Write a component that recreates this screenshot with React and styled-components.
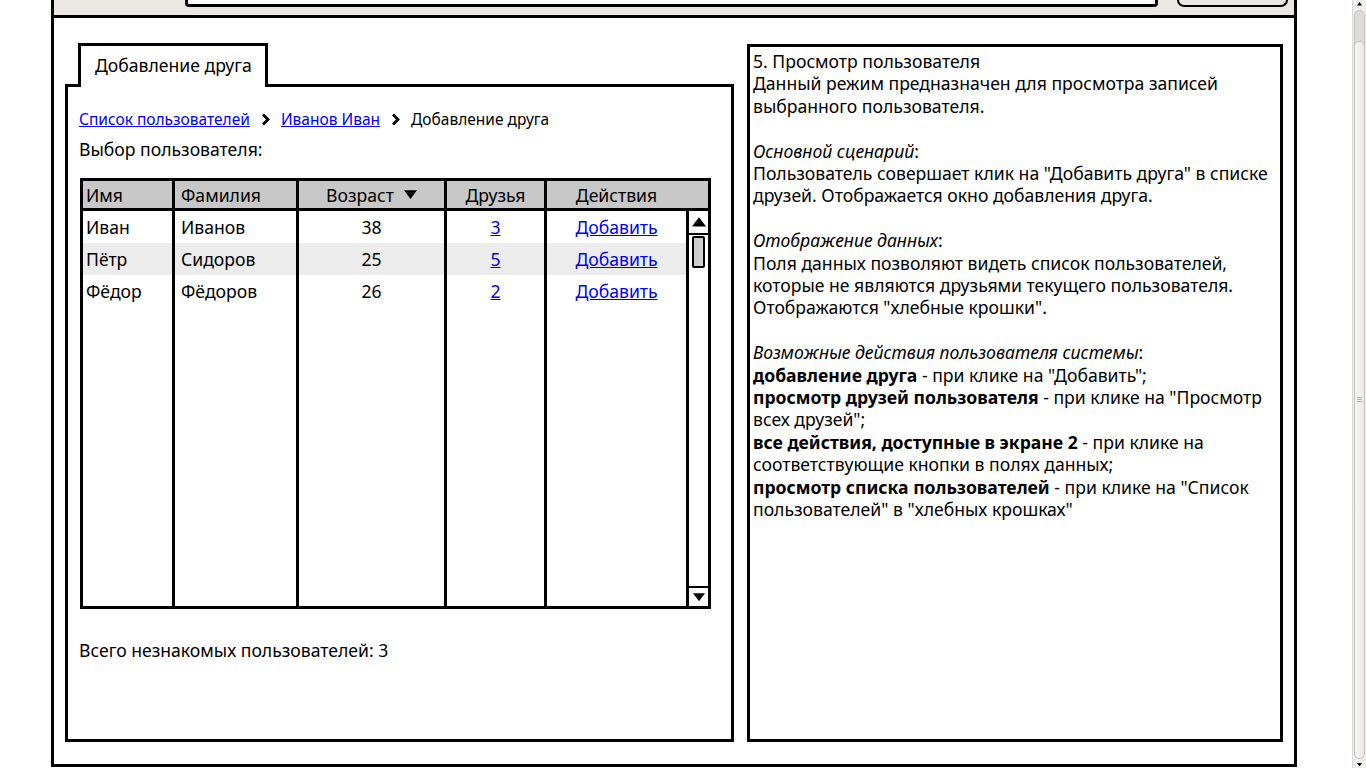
import styled, { createGlobalStyle } from "styled-components";

const GlobalStyle = createGlobalStyle`
  body {
    margin: 0;
    font-family: "Noto Sans", "Open Sans", sans-serif;
    color: #000;
  }
`;

const Page = styled.div`
  display: flex;
  width: 1366px;
  height: 768px;
  overflow: hidden;
  background: #fff;
`;

const Stage = styled.div`
  flex: 1;
  padding-left: 51px;
`;

const Window = styled.div`
  width: 1246px;
  height: 767px;
  box-sizing: border-box;
  border: 3px solid #000;
  border-top: none;
  display: flex;
  flex-direction: column;
`;

const TopStrip = styled.div`
  height: 18px;
  flex-shrink: 0;
  box-sizing: border-box;
  background: #ebe8e4;
  border-bottom: 3px solid #000;
  display: flex;
  align-items: flex-start;
`;

const UrlBox = styled.div`
  margin-left: 131px;
  width: 973px;
  height: 7px;
  box-sizing: border-box;
  background: #fff;
  border: 3px solid #000;
  border-top: none;
  border-radius: 0 0 4px 4px;
`;

const GoButton = styled.div`
  margin-left: 19px;
  width: 111px;
  height: 7px;
  box-sizing: border-box;
  border: 2px solid #000;
  border-top: none;
  border-radius: 0 0 9px 9px;
`;

const Content = styled.div`
  flex: 1;
  min-height: 0;
  display: flex;
  gap: 13px;
  padding: 25px 11px 22px 11px;
`;

const LeftPane = styled.div`
  width: 669px;
  display: flex;
  flex-direction: column;
`;

const TabRow = styled.div`
  display: flex;
  padding-left: 13px;
`;

const Tab = styled.div`
  position: relative;
  z-index: 1;
  width: 190px;
  height: 44px;
  box-sizing: border-box;
  padding: 0 0 3px 14px;
  margin-bottom: -3px;
  border: 3px solid #000;
  border-bottom: none;
  background: #fff;
  display: flex;
  align-items: center;
  font-size: 17.6px;
`;

const TabBody = styled.div`
  flex: 1;
  border: 3px solid #000;
  padding: 22px 12px 0 11px;
  display: flex;
  flex-direction: column;
`;

const Crumbs = styled.div`
  display: flex;
  align-items: center;
  gap: 11px;
  height: 20px;
  font-size: 15.5px;
`;

const Link = styled.a`
  color: #0000ff;
  text-decoration: underline;
  cursor: pointer;
`;

const Text = styled.div`
  font-size: 17.6px;
  line-height: 22px;
  margin-top: ${(p) => p.top || 0}px;
`;

const Table = styled.div`
  flex-shrink: 0;
  margin: ${(p) => p.top}px 0 0 1px;
  width: 631px;
  height: 431px;
  box-sizing: border-box;
  border: 3px solid #000;
  display: flex;
  flex-direction: column;
`;

const HeadRow = styled.div`
  display: flex;
  height: 27px;
  background: #c8c8c8;
  border-bottom: 3px solid #000;
  font-size: 17.6px;
`;

const Col = styled.div`
  width: ${(p) => (p.w ? `${p.w}px` : "auto")};
  flex: ${(p) => (p.w ? "none" : 1)};
  box-sizing: border-box;
  border-right: ${(p) => (p.last ? "none" : "3px solid #000")};
  display: flex;
  flex-direction: column;
`;

const HeadCell = styled(Col)`
  flex-direction: row;
  align-items: center;
  justify-content: ${(p) => (p.center ? "center" : "flex-start")};
  padding-left: ${(p) => p.pl || 0}px;
  padding-right: ${(p) => p.pr || 0}px;
  gap: 10px;
`;

const Body = styled.div`
  flex: 1;
  display: flex;
  min-height: 0;
`;

const Cell = styled.div`
  height: 32px;
  display: flex;
  align-items: center;
  justify-content: ${(p) => (p.center ? "center" : "flex-start")};
  padding-left: ${(p) => p.pl || 0}px;
  background: ${(p) => (p.striped ? "#ececec" : "transparent")};
  font-size: 17.6px;
`;

const TableScroll = styled.div`
  width: 22px;
  box-sizing: border-box;
  border-left: 3px solid #000;
  display: flex;
  flex-direction: column;
  align-items: center;
`;

const ArrowBox = styled.div`
  width: 100%;
  height: ${(p) => p.h}px;
  box-sizing: border-box;
  border-top: ${(p) => (p.down ? "2px solid #000" : "none")};
  border-bottom: ${(p) => (p.down ? "none" : "2px solid #000")};
  display: flex;
  align-items: center;
  justify-content: center;
`;

const Thumb = styled.div`
  width: 13px;
  height: 32px;
  margin-top: 1px;
  box-sizing: border-box;
  border: 2px solid #000;
  border-radius: 2px;
  background: #cfcfcf;
`;

const Spacer = styled.div`
  flex: 1;
`;

const InfoPanel = styled.div`
  width: 536px;
  margin-top: 1px;
  box-sizing: border-box;
  border: 3px solid #000;
  padding: 3px 3px;
  font-size: 17.6px;
  line-height: 22.4px;
`;

const Para = styled.p`
  margin: 0 0 ${(p) => (p.gap ? "22.4px" : "0")};
`;

const PageScroll = styled.div`
  width: 14px;
  background: #efeeec;
  border-left: 1px solid #dcdad7;
  box-sizing: border-box;
  display: flex;
  flex-direction: column;
  align-items: center;
  padding: 2px 1px 2px;
`;

const PageTrack = styled.div`
  width: 11px;
  flex: 1;
  border: 1px solid #c4c2be;
  border-radius: 6px;
  background: #dddbd7;
  display: flex;
  flex-direction: column;
  box-sizing: border-box;
  margin: 4px 0;
`;

const PageThumb = styled.div`
  margin-top: 30px;
  flex: 1;
  border-top: 1px solid #c4c2be;
  border-radius: 6px;
  background: linear-gradient(to right, #f7f6f5, #ebe9e6);
  display: flex;
  align-items: center;
  justify-content: center;
`;

const Grip = styled.div`
  width: 5px;
  height: 5px;
  border-top: 1px solid #b0aeaa;
  border-bottom: 1px solid #b0aeaa;
  box-sizing: border-box;
  position: relative;
  &::after {
    content: "";
    position: absolute;
    left: 0;
    right: 0;
    top: 1px;
    border-top: 1px solid #b0aeaa;
  }
`;

const Chevron = () => (
  <svg width="9" height="13" viewBox="0 0 9 13">
    <path d="M2 1.5 L7 6.5 L2 11.5" fill="none" stroke="#000" strokeWidth="2.8" />
  </svg>
);

const Triangle = ({ up, size = 12 }) => (
  <svg width={size} height={size * 0.7} viewBox="0 0 12 8">
    <path d={up ? "M0 8 L6 0 L12 8 Z" : "M0 0 L12 0 L6 8 Z"} fill="#000" />
  </svg>
);

const users = [
  { first: "Иван", last: "Иванов", age: 38, friends: 3 },
  { first: "Пётр", last: "Сидоров", age: 25, friends: 5 },
  { first: "Фёдор", last: "Фёдоров", age: 26, friends: 2 },
];

const App = () => {
  return (
    <Page>
      <GlobalStyle />
      <Stage>
        <Window>
          <TopStrip>
            <UrlBox />
            <GoButton />
          </TopStrip>

          <Content>
            <LeftPane>
              <TabRow>
                <Tab>Добавление друга</Tab>
              </TabRow>
              <TabBody>
                <Crumbs>
                  <Link>Список пользователей</Link>
                  <Chevron />
                  <Link>Иванов Иван</Link>
                  <Chevron />
                  <span>Добавление друга</span>
                </Crumbs>
                <Text top={9}>Выбор пользователя:</Text>

                <Table top={18}>
                  <HeadRow>
                    <HeadCell w={92} pl={3}>Имя</HeadCell>
                    <HeadCell w={124} pl={6}>Фамилия</HeadCell>
                    <HeadCell w={148} center>
                      Возраст <Triangle size={13} />
                    </HeadCell>
                    <HeadCell w={100} center>Друзья</HeadCell>
                    <HeadCell last center pr={22}>Действия</HeadCell>
                  </HeadRow>
                  <Body>
                    <Col w={92}>
                      {users.map((u, i) => (
                        <Cell key={u.first} pl={3} striped={i === 1}>{u.first}</Cell>
                      ))}
                    </Col>
                    <Col w={124}>
                      {users.map((u, i) => (
                        <Cell key={u.last} pl={6} striped={i === 1}>{u.last}</Cell>
                      ))}
                    </Col>
                    <Col w={148}>
                      {users.map((u, i) => (
                        <Cell key={u.first} center striped={i === 1}>{u.age}</Cell>
                      ))}
                    </Col>
                    <Col w={100}>
                      {users.map((u, i) => (
                        <Cell key={u.first} center striped={i === 1}>
                          <Link>{u.friends}</Link>
                        </Cell>
                      ))}
                    </Col>
                    <Col last>
                      {users.map((u, i) => (
                        <Cell key={u.first} center striped={i === 1}>
                          <Link>Добавить</Link>
                        </Cell>
                      ))}
                    </Col>
                    <TableScroll>
                      <ArrowBox h={24}>
                        <Triangle up size={14} />
                      </ArrowBox>
                      <Thumb />
                      <Spacer />
                      <ArrowBox h={20} down>
                        <Triangle size={12} />
                      </ArrowBox>
                    </TableScroll>
                  </Body>
                </Table>

                <Text top={30}>Всего незнакомых пользователей: 3</Text>
              </TabBody>
            </LeftPane>

            <InfoPanel>
              <Para>5. Просмотр пользователя</Para>
              <Para gap>
                Данный режим предназначен для просмотра записей выбранного пользователя.
              </Para>
              <Para>
                <i>Основной сценарий</i>:
              </Para>
              <Para gap>
                Пользователь совершает клик на "Добавить друга" в списке друзей. Отображается окно
                добавления друга.
              </Para>
              <Para>
                <i>Отображение данных</i>:
              </Para>
              <Para gap>
                Поля данных позволяют видеть список пользователей, которые не являются друзьями
                текущего пользователя. Отображаются "хлебные крошки".
              </Para>
              <Para>
                <i>Возможные действия пользователя системы</i>:
              </Para>
              <Para>
                <b>добавление друга</b> - при клике на "Добавить";
              </Para>
              <Para>
                <b>просмотр друзей пользователя</b> - при клике на "Просмотр всех друзей";
              </Para>
              <Para>
                <b>все действия, доступные в экране 2</b> - при клике на соответствующие кнопки в
                полях данных;
              </Para>
              <Para>
                <b>просмотр списка пользователей</b> - при клике на "Список пользователей" в
                "хлебных крошках"
              </Para>
            </InfoPanel>
          </Content>
        </Window>
      </Stage>
      <PageScroll>
        <Triangle up size={5} />
        <PageTrack>
          <PageThumb>
            <Grip />
          </PageThumb>
        </PageTrack>
        <Triangle size={5} />
      </PageScroll>
    </Page>
  );
};

export default App;
